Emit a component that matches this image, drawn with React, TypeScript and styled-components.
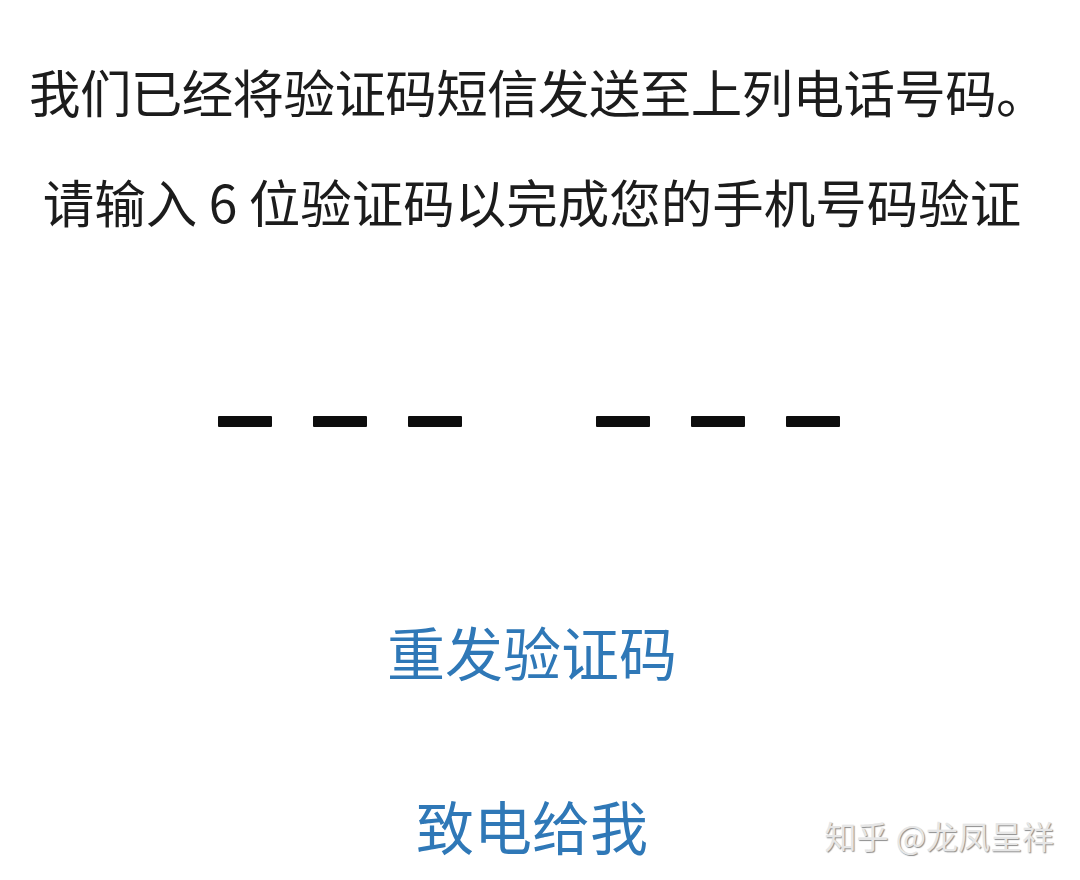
import React from "react";
import styled, { createGlobalStyle } from "styled-components";

const Global = createGlobalStyle`
  html, body { margin: 0; padding: 0; background: #ffffff; }
  body { font-family: "Noto Sans CJK SC", "Noto Sans", sans-serif; }
`;

const Page = styled.div`
  position: relative;
  width: 1080px;
  height: 880px;
  overflow: hidden;
  display: flex;
  flex-direction: column;
  align-items: center;
  padding: 60px 16px 0 0;
  box-sizing: border-box;
`;

const Line = styled.p<{ $top: number; $spacing?: number; $shift?: number }>`
  margin: ${(p) => p.$top}px 0 0 ${(p) => p.$shift ?? 0}px;
  font-size: 51.5px;
  line-height: 62px;
  letter-spacing: ${(p) => p.$spacing ?? 0}px;
  color: #1c1c1c;
  white-space: nowrap;
`;

const Code = styled.div`
  display: flex;
  gap: 134px;
  margin-top: 184px;
  margin-left: -6px;
`;

const Group = styled.div`
  display: flex;
  gap: 41px;
`;

const Dash = styled.span`
  width: 54px;
  height: 11px;
  background: #0d0d0d;
  border-radius: 1px;
`;

const Action = styled.button<{ $top: number }>`
  margin-top: ${(p) => p.$top}px;
  padding: 0;
  border: none;
  background: none;
  font-family: "Noto Sans CJK SC", "Noto Sans", sans-serif;
  font-size: 58px;
  line-height: 68px;
  color: #2f78b7;
  cursor: pointer;
`;

const Watermark = styled.div`
  position: absolute;
  right: 26px;
  bottom: 26px;
  font-size: 32px;
  line-height: 38px;
  color: #e6e6e6;
  text-shadow: 1px 1px 1px rgba(0, 0, 0, 0.45);
  white-space: nowrap;
`;

export default function App() {
  return (
    <>
      <Global />
      <Page>
        <Line $top={0} $spacing={-0.6} $shift={12}>
          我们已经将验证码短信发送至上列电话号码。
        </Line>
        <Line $top={48}>请输入 6 位验证码以完成您的手机号码验证</Line>
        <Code>
          {[0, 1].map((g) => (
            <Group key={g}>
              {[0, 1, 2].map((d) => (
                <Dash key={d} />
              ))}
            </Group>
          ))}
        </Code>
        <Action $top={190}>重发验证码</Action>
        <Action $top={106}>致电给我</Action>
        <Watermark>知乎 @龙凤呈祥</Watermark>
      </Page>
    </>
  );
}
